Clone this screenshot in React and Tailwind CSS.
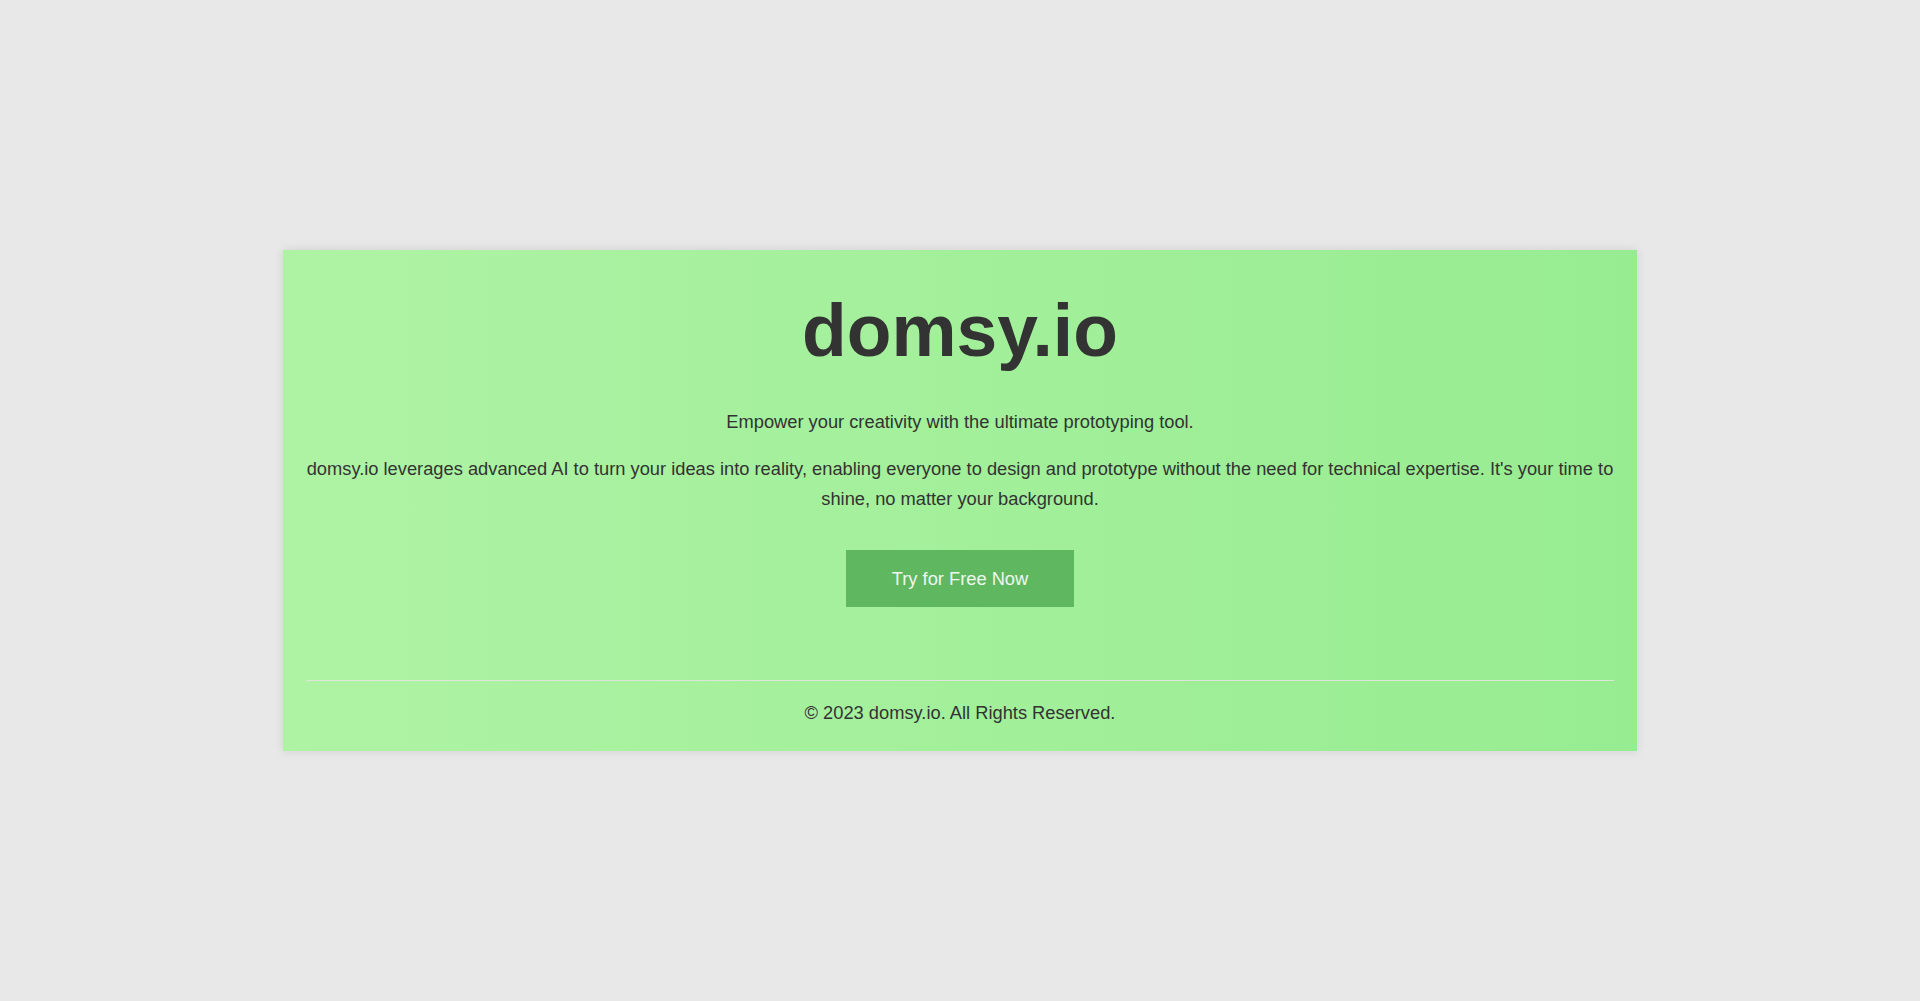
export default function App() {
  return (
    <div
      className="min-h-screen bg-[#e8e8e8] flex items-center justify-center text-[#333]"
      style={{ fontFamily: '"Liberation Sans", Arial, sans-serif' }}
    >
      <div className="w-[1354px] px-[22px] pt-[23px] pb-[24px] bg-gradient-to-r from-[#aef3a4] to-[#97ec91] shadow-[0_0_10px_rgba(0,0,0,0.1)] text-center leading-[1.6]">
        <header>
          <h1 className="text-[73.2px] font-bold leading-[1.6]">domsy.io</h1>
        </header>

        <section className="mt-[17px] text-[18.3px]">
          <p>Empower your creativity with the ultimate prototyping tool.</p>
          <p className="mt-[18px]">
            domsy.io leverages advanced AI to turn your ideas into reality, enabling everyone to design and
            prototype without the need for technical expertise. It's your time to shine, no matter your background.
          </p>
          <button className="mt-[37px] h-[57px] w-[228px] bg-[#5fb760] text-[#eef7ee] text-[18.3px]">
            Try for Free Now
          </button>
        </section>

        <footer className="mt-[73px] mx-px border-t border-[#dde6d8] pt-[17px] text-[18.3px]">
          <p>© 2023 domsy.io. All Rights Reserved.</p>
        </footer>
      </div>
    </div>
  );
}
